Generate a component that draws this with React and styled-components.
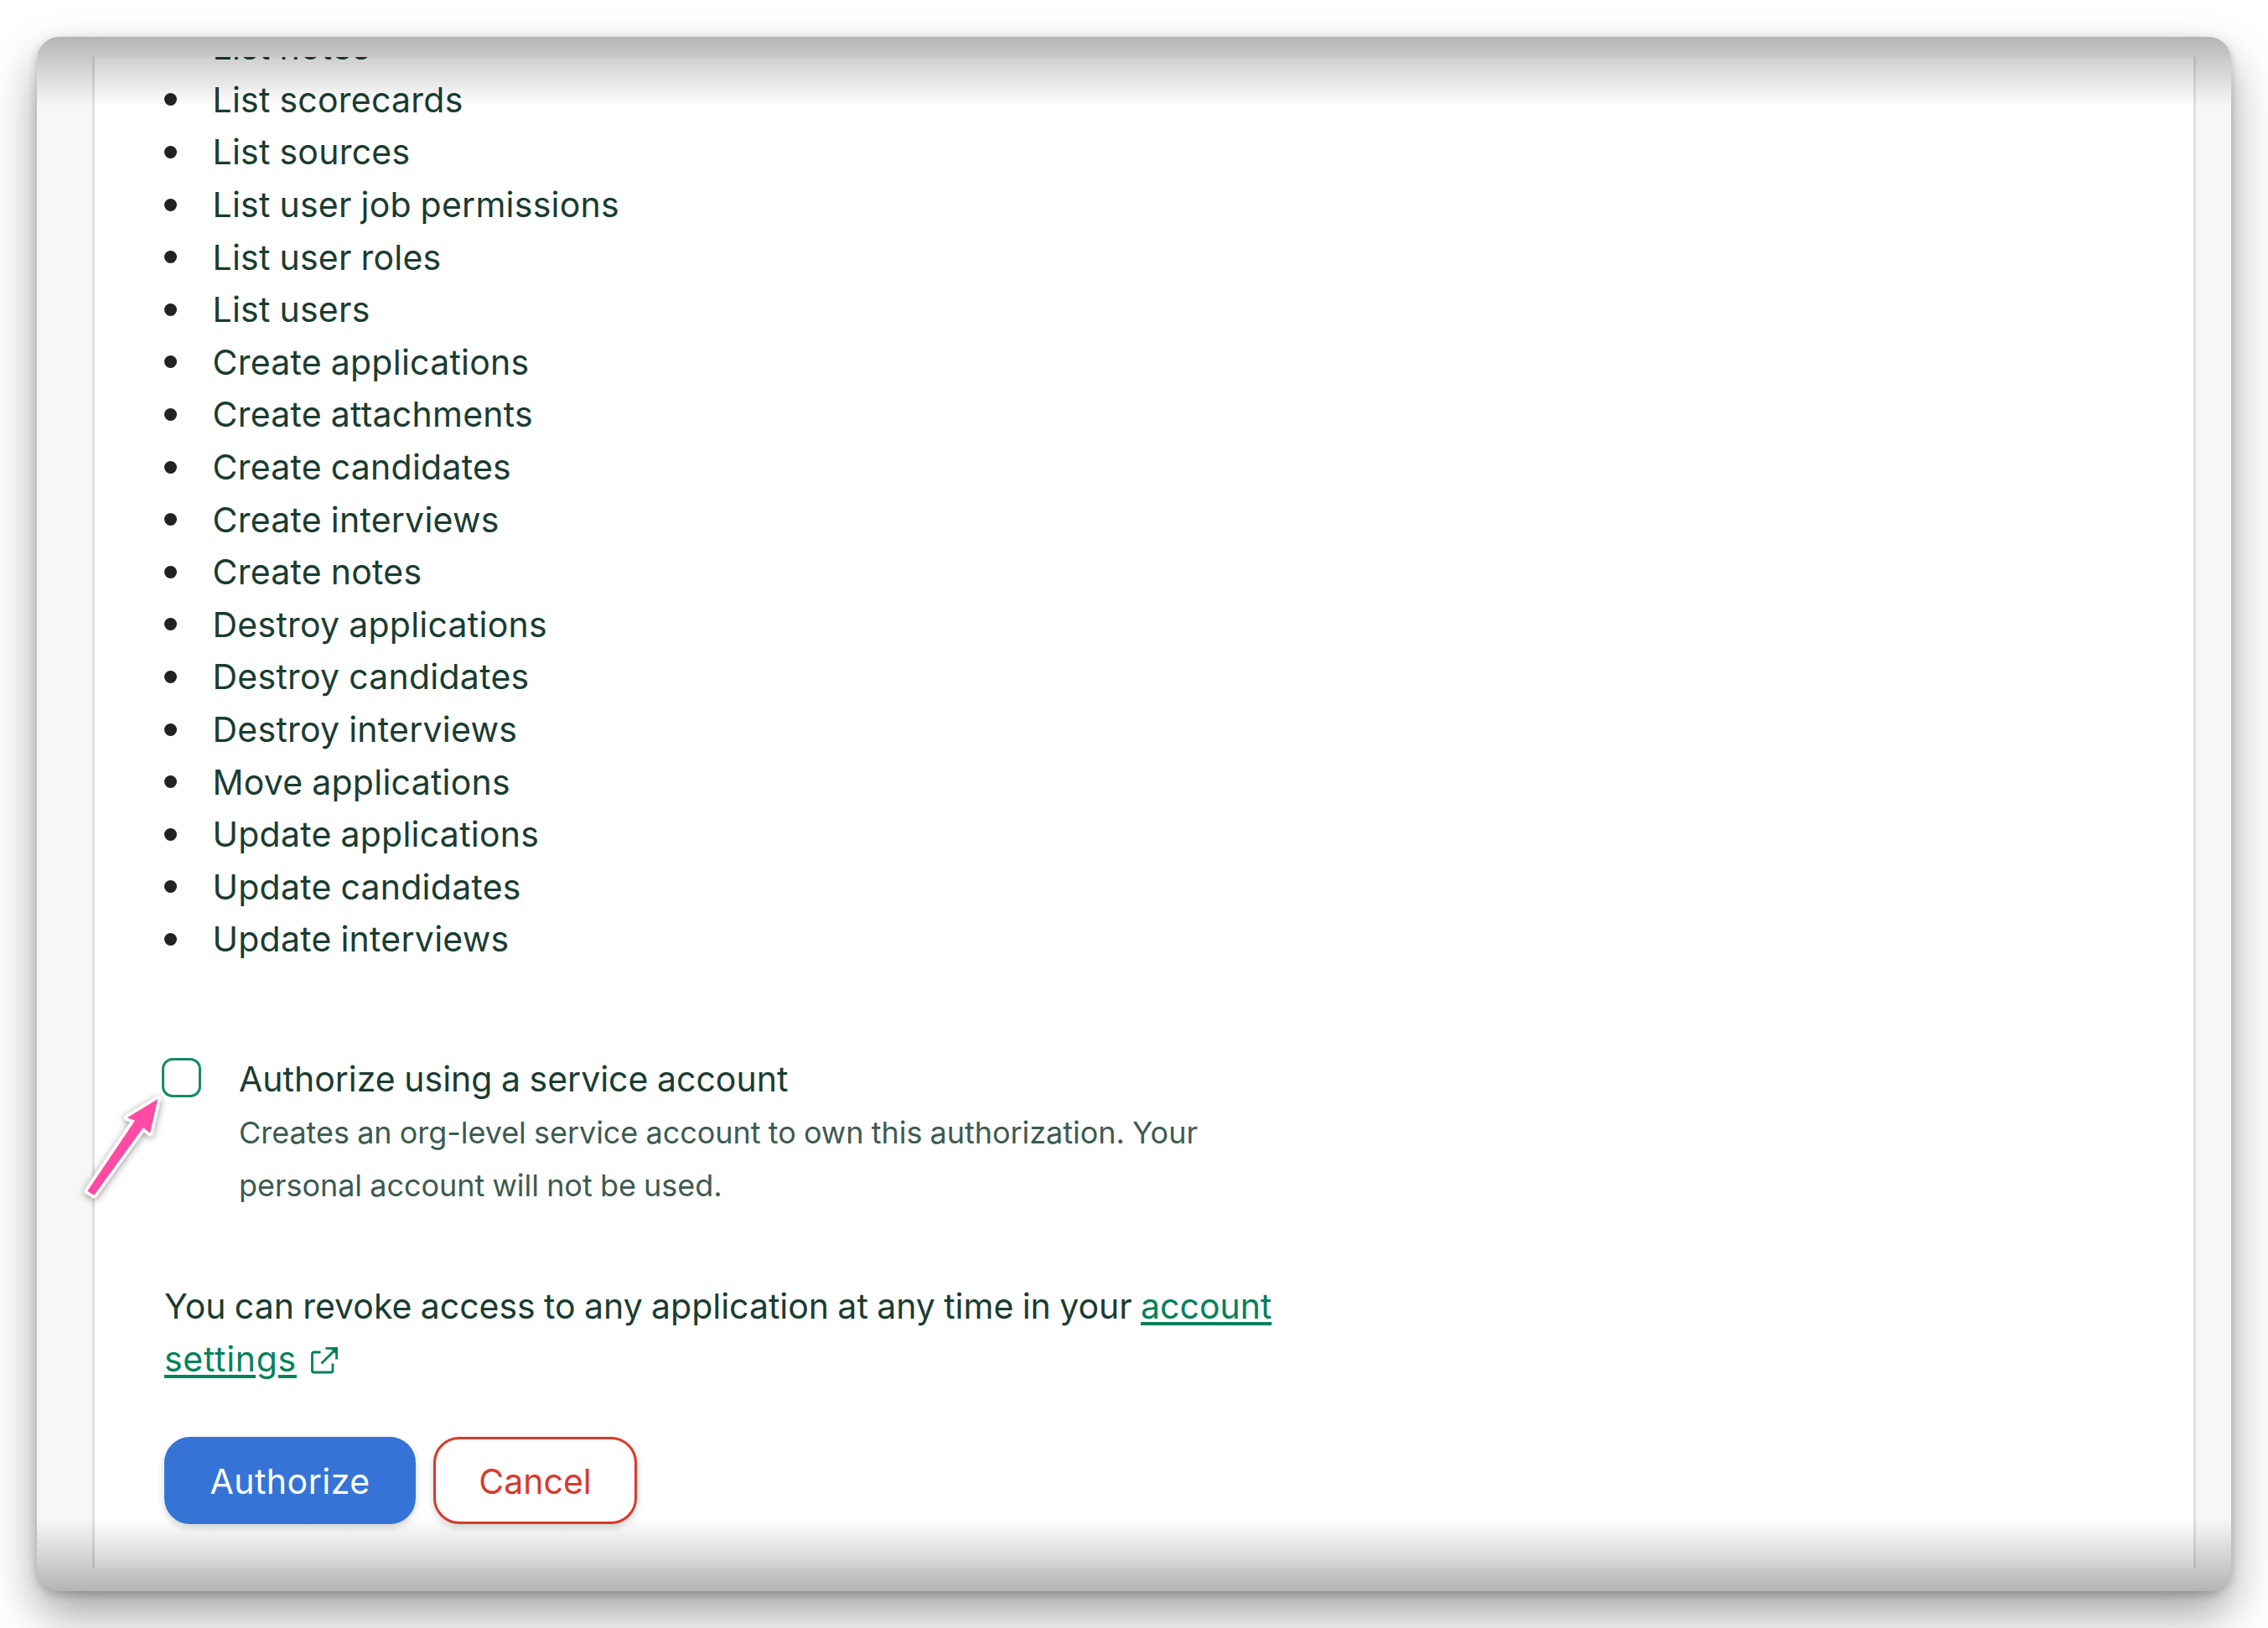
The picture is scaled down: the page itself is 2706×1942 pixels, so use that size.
import { useState } from 'react';
import styled, { createGlobalStyle } from 'styled-components';

const GlobalStyle = createGlobalStyle`
  * {
    box-sizing: border-box;
  }

  body {
    margin: 0;
    background-color: #fff;
    font-family: Inter, 'Liberation Sans', sans-serif;
    font-weight: 430;
    color: #1a3c31;
  }
`;

const Page = styled.main`
  height: 1942px;
  padding: 44px;
  overflow: hidden;
`;

const Window = styled.div`
  position: relative;
  height: 1854px;
  padding: 24px 42px 28px 66px;
  border-radius: 27px;
  background-color: #f7f7f7;
  box-shadow:
    0 4px 12px rgba(0, 0, 0, 0.2),
    0 28px 56px rgba(0, 0, 0, 0.36);
`;

// Scroll shade over the top and bottom edges of the window
const Shade = styled.div`
  position: absolute;
  left: 0;
  right: 0;
  ${({ $edge }) => $edge}: 0;
  height: ${({ $edge }) => ($edge === 'top' ? '83px' : '87px')};
  border-radius: ${({ $edge }) => ($edge === 'top' ? '27px 27px 0 0' : '0 0 27px 27px')};
  background: linear-gradient(
    to ${({ $edge }) => ($edge === 'top' ? 'bottom' : 'top')},
    rgba(0, 0, 0, 0.27),
    rgba(0, 0, 0, 0)
  );
  pointer-events: none;
`;

const Panel = styled.section`
  width: 2510px;
  height: 1802px;
  overflow: hidden;
  padding-left: 83px;
  border-left: 3px solid #e0e0e0;
  border-right: 3px solid #e0e0e0;
  background-color: #fff;
`;

const PermissionList = styled.ul`
  margin: -43px 0 104px;
  padding: 0;
  list-style: none;
`;

const Permission = styled.li`
  display: flex;
  align-items: center;
  gap: 42.5px;
  height: 62.6px;
  font-size: 41px;
  letter-spacing: 0.25px;
  word-spacing: -1px;
  white-space: nowrap;

  &::before {
    content: '';
    width: 15px;
    height: 15px;
    border-radius: 50%;
    background-color: #222;
  }
`;

const CheckboxRow = styled.label`
  display: flex;
  gap: 45px;
  margin-left: -3px;
`;

const Checkbox = styled.input`
  appearance: none;
  flex: none;
  width: 47px;
  height: 47px;
  margin: 6.5px 0 0;
  border: 3px solid #178a68;
  border-radius: 13px;
  background-color: ${({ checked }) => (checked ? '#178a68' : '#fff')};
`;

const CheckboxTitle = styled.div`
  margin-bottom: 2px;
  font-size: 41px;
  line-height: 62.6px;
  word-spacing: -1px;
`;

const CheckboxHint = styled.div`
  font-size: 36px;
  line-height: 62.6px;
  letter-spacing: -0.05px;
  word-spacing: -0.8px;
  color: #3d5a50;
`;

const Notice = styled.p`
  margin: 82px 0 61px;
  font-size: 41px;
  line-height: 62.6px;
  letter-spacing: -0.02px;
  word-spacing: -1.1px;
`;

const SettingsLink = styled.a`
  color: #05815c;
  text-decoration: underline;
  text-decoration-thickness: 4px;
  text-underline-offset: 4px;
`;

const SecondLine = styled.span`
  letter-spacing: 0.7px;
`;

const ExternalIcon = styled.svg`
  width: 34px;
  height: 34px;
  margin-left: 16px;
  vertical-align: -4px;
  fill: none;
  stroke: #05815c;
  stroke-width: 2.8;
`;

const ButtonRow = styled.div`
  display: flex;
  gap: 21px;
`;

const Button = styled.button`
  width: ${({ $primary }) => ($primary ? '300px' : '243px')};
  height: 104px;
  padding: 2px 0 0;
  border: 3px solid ${({ $primary }) => ($primary ? '#3574d6' : '#d93a2b')};
  border-radius: 31px;
  background-color: ${({ $primary }) => ($primary ? '#3574d6' : '#fff')};
  box-shadow: 0 4px 8px rgba(21, 55, 44, 0.2);
  color: ${({ $primary }) => ($primary ? '#fff' : '#d93a2b')};
  font-family: inherit;
  font-size: 41px;
  font-weight: inherit;
  letter-spacing: ${({ $primary }) => ($primary ? '0.5px' : '0')};
`;

// Callout drawn on top of the page
const Arrow = styled.svg`
  position: absolute;
  left: 46px;
  top: 1256px;
  width: 110px;
  height: 140px;
  fill: #ff4ba3;
  filter: drop-shadow(0 2px 4px rgba(0, 0, 0, 0.4));
`;

const permissions = [
  'List notes',
  'List scorecards',
  'List sources',
  'List user job permissions',
  'List user roles',
  'List users',
  'Create applications',
  'Create attachments',
  'Create candidates',
  'Create interviews',
  'Create notes',
  'Destroy applications',
  'Destroy candidates',
  'Destroy interviews',
  'Move applications',
  'Update applications',
  'Update candidates',
  'Update interviews',
];

const App = () => {
  const [serviceAccount, setServiceAccount] = useState(false);

  return (
    <Page>
      <GlobalStyle />
      <Window>
        <Panel>
          <PermissionList>
            {permissions.map((permission) => (
              <Permission key={permission}>{permission}</Permission>
            ))}
          </PermissionList>
          <CheckboxRow>
            <Checkbox
              type="checkbox"
              checked={serviceAccount}
              onChange={(e) => setServiceAccount(e.target.checked)}
            />
            <div>
              <CheckboxTitle>Authorize using a service account</CheckboxTitle>
              <CheckboxHint>
                Creates an org-level service account to own this authorization. Your
                <br />
                personal account will not be used.
              </CheckboxHint>
            </div>
          </CheckboxRow>
          <Notice>
            You can revoke access to any application at any time in your{' '}
            <SettingsLink>
              account
              <br />
              <SecondLine>settings</SecondLine>
            </SettingsLink>
            <ExternalIcon viewBox="0 0 34 34">
              <path d="M12.5 7H4.5a2 2 0 0 0-2 2V29a2 2 0 0 0 2 2H25a2 2 0 0 0 2-2V20.5M13.5 20.5L31 3M18.5 2.4H31.6V15.5" />
              <path d="M24 2.4H31.6V10Z" fill="#05815c" stroke="none" />
            </ExternalIcon>
          </Notice>
          <ButtonRow>
            <Button $primary>Authorize</Button>
            <Button>Cancel</Button>
          </ButtonRow>
        </Panel>
        <Shade $edge="top" />
        <Shade $edge="bottom" />
        <Arrow viewBox="90 1300 110 140">
          <path
            d="M188.3 1311L151.7 1333.3L161 1336.7L104.3 1420.7L112.3 1425.7L171 1345L179 1351.7Z"
            stroke="#fff"
            strokeWidth="7.5"
            strokeLinejoin="round"
            paintOrder="stroke"
          />
        </Arrow>
      </Window>
    </Page>
  );
};

export default App;
